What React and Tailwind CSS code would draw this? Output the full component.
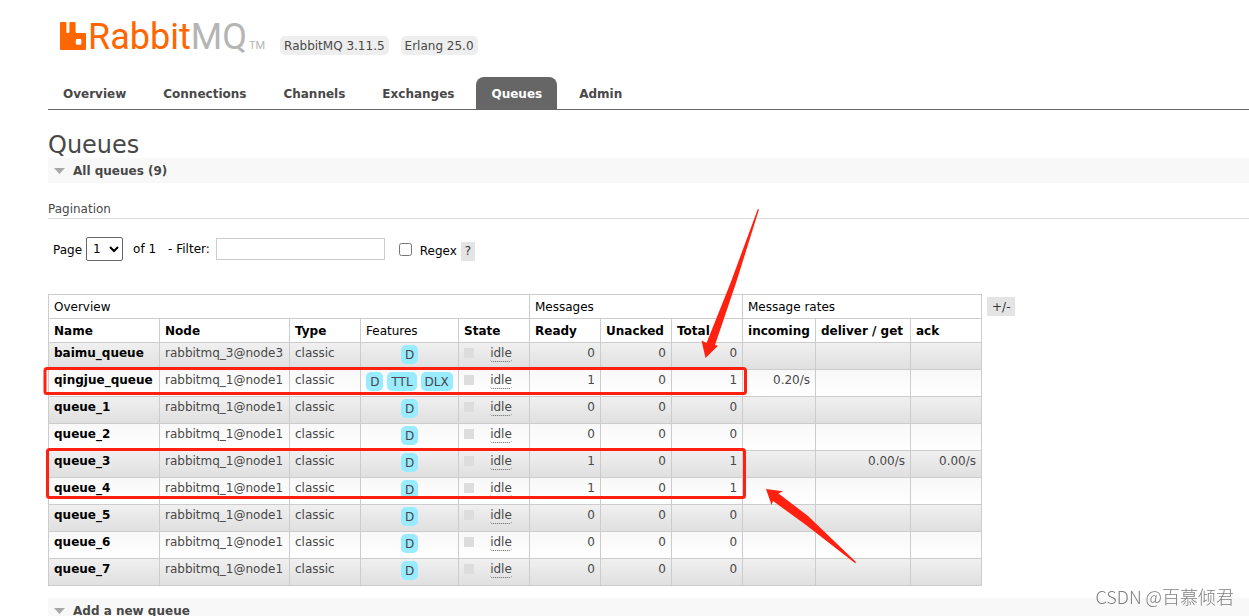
import { useState } from "react";

const TABS = ["Overview", "Connections", "Channels", "Exchanges", "Queues", "Admin"];

const COLUMNS = [
  { label: "Name", width: "w-[111px]", sortable: true },
  { label: "Node", width: "w-[130px]", sortable: true },
  { label: "Type", width: "w-[71px]", sortable: true },
  { label: "Features", width: "w-[98px]", sortable: false },
  { label: "State", width: "w-[71px]", sortable: true },
  { label: "Ready", width: "w-[71px]", sortable: true },
  { label: "Unacked", width: "w-[71px]", sortable: true },
  { label: "Total", width: "w-[71px]", sortable: true },
  { label: "incoming", width: "w-[73px]", sortable: true },
  { label: "deliver / get", width: "w-[95px]", sortable: true },
  { label: "ack", width: "w-[71px]", sortable: true },
];

const QUEUES = [
  { name: "baimu_queue", node: "rabbitmq_3@node3", features: ["D"], ready: 0, unacked: 0, total: 0 },
  {
    name: "qingjue_queue",
    node: "rabbitmq_1@node1",
    features: ["D", "TTL", "DLX"],
    ready: 1,
    unacked: 0,
    total: 1,
    incoming: "0.20/s",
  },
  { name: "queue_1", node: "rabbitmq_1@node1", features: ["D"], ready: 0, unacked: 0, total: 0 },
  { name: "queue_2", node: "rabbitmq_1@node1", features: ["D"], ready: 0, unacked: 0, total: 0 },
  {
    name: "queue_3",
    node: "rabbitmq_1@node1",
    features: ["D"],
    ready: 1,
    unacked: 0,
    total: 1,
    deliver: "0.00/s",
    ack: "0.00/s",
  },
  { name: "queue_4", node: "rabbitmq_1@node1", features: ["D"], ready: 1, unacked: 0, total: 1 },
  { name: "queue_5", node: "rabbitmq_1@node1", features: ["D"], ready: 0, unacked: 0, total: 0 },
  { name: "queue_6", node: "rabbitmq_1@node1", features: ["D"], ready: 0, unacked: 0, total: 0 },
  { name: "queue_7", node: "rabbitmq_1@node1", features: ["D"], ready: 0, unacked: 0, total: 0 },
];

const CELL = "border border-[#ccc] px-[5px]";

function Logo() {
  return (
    <a href="#/" className="flex items-end">
      <svg viewBox="0 0 26 28" className="w-[26px] h-7 mb-[5px]" aria-hidden="true">
        <path
          fill="#f60"
          fillRule="evenodd"
          d="M1 0h4.400a1 1 0 0 1 1 1v9a1 1 0 0 0 1 1h1a1 1 0 0 0 1-1V1a1 1 0 0 1 1-1H14.600a1 1 0 0 1 1 1v9a1 1 0 0 0 1 1h8.400a1 1 0 0 1 1 1v15a1 1 0 0 1-1 1H1a1 1 0 0 1-1-1V1a1 1 0 0 1 1-1zM17 17a1.200 1.200 0 0 0-1.200 1.200v3.400A1.200 1.200 0 0 0 17 22.800h3.200a1.200 1.200 0 0 0 1.200-1.200v-3.400A1.200 1.200 0 0 0 20.200 17z"
        />
      </svg>
      <span className="pl-[2px] font-[Roboto,sans-serif] text-[36px] leading-9 text-[#f60]">
        Rabbit<span className="text-[#b5b5b5]">MQ</span>
      </span>
      <span className="mb-[3px] pl-[2px] font-[Roboto,sans-serif] text-[11px] leading-3 text-[#b5b5b5]">TM</span>
    </a>
  );
}

function SectionBar({ title, open, onToggle }) {
  return (
    <h2 className="bg-[#f8f8f8]">
      <button
        type="button"
        onClick={onToggle}
        className="flex w-full items-center gap-2 pl-[6px] pt-px h-[25px] font-bold text-left"
      >
        <svg viewBox="0 0 11 6" className={open ? "w-[11px] h-[6px]" : "w-[11px] h-[6px] -rotate-90"} aria-hidden="true">
          <path d="M0 0h11L5.500 6z" fill="#a8a8a8" />
        </svg>
        {title}
      </button>
    </h2>
  );
}

function QueueRow({ queue, shaded }) {
  const num = `${CELL} pt-[3px] text-right`;
  return (
    <tr
      className={
        shaded
          ? "h-[27px] align-top bg-linear-to-b from-[#f0f0f0] to-[#dfdfdf]"
          : "h-[27px] align-top bg-linear-to-b from-[#f8f8f8] to-white"
      }
    >
      <td className={`${CELL} pt-[3px]`}>
        <a href={`#/queues/${queue.name}`} className="font-bold text-black">
          {queue.name}
        </a>
      </td>
      <td className={`${CELL} pt-[3px]`}>{queue.node}</td>
      <td className={`${CELL} pt-[3px]`}>classic</td>
      <td className={`${CELL} pt-[2px]`}>
        <div className="flex justify-center gap-1">
          {queue.features.map((f) => (
            <span key={f} className="rounded-[5px] bg-[#99ebff] px-1 pt-[2px] leading-[17px]">
              {f}
            </span>
          ))}
        </div>
      </td>
      <td className={`${CELL} pt-[3px]`}>
        <div className="flex">
          <span className="w-[10px] h-[10px] mt-[2px] bg-[#ddd]" />
          <span className="flex-1 pl-1 text-center">
            <abbr className="inline-block rounded-[3px] border-b border-dotted border-[#666] no-underline">
              idle
            </abbr>
          </span>
        </div>
      </td>
      <td className={num}>{queue.ready}</td>
      <td className={num}>{queue.unacked}</td>
      <td className={num}>{queue.total}</td>
      <td className={num}>{queue.incoming}</td>
      <td className={num}>{queue.deliver}</td>
      <td className={num}>{queue.ack}</td>
    </tr>
  );
}

// Red boxes and arrows drawn over the table
function Annotations() {
  return (
    <svg className="pointer-events-none absolute inset-0 w-full h-full" aria-hidden="true">
      <g fill="none" stroke="#ff2010" strokeWidth="3">
        <rect x="45" y="368.500" width="700.500" height="25" rx="2" />
        <rect x="47.500" y="449.500" width="697" height="48" rx="2" />
      </g>
      <g fill="#ff2010">
        <path d="M757.800 209l1.200 0.600L736 283 715 345l3 0.700L705.500 358l-4-17.500 5 2.500L730.500 283z" />
        <path d="M766 489l17 2.200-4.500 2.300L808 516l48 46-0.800 1.200L806 525 773 501l-1.500 4z" />
      </g>
    </svg>
  );
}

export default function App() {
  const [tab, setTab] = useState("Queues");
  const [filter, setFilter] = useState("");
  const [regex, setRegex] = useState(false);
  const [listOpen, setListOpen] = useState(true);
  const [addOpen, setAddOpen] = useState(true);

  return (
    <div className="relative min-h-screen overflow-hidden bg-white font-['DejaVu_Sans',Verdana,sans-serif] text-[12px] leading-[15px] text-[#484848]">
      <header className="pl-12">
        <div className="flex items-end gap-[15px] pl-3 pt-4 h-[55px]">
          <Logo />
          <div className="flex gap-3">
            <span className="rounded-[5px] bg-[#eee] px-1 pt-[3px] pb-px">RabbitMQ 3.11.5</span>
            <span className="rounded-[5px] bg-[#eee] px-1 pt-[3px] pb-px">Erlang 25.0</span>
          </div>
        </div>
        <nav className="mt-[22px] flex gap-[7px] border-b border-[#666]">
          {TABS.map((t) => (
            <a
              key={t}
              href={`#/${t.toLowerCase()}`}
              onClick={() => setTab(t)}
              className={
                t === tab
                  ? "rounded-t-lg bg-[#666] px-[15px] pt-[10px] pb-[7px] font-bold text-white"
                  : "px-[15px] pt-[10px] pb-[7px] font-bold"
              }
            >
              {t}
            </a>
          ))}
        </nav>
      </header>

      <main className="pl-12 pt-[21px]">
        <h1 className="pt-px text-[24px] leading-[26px]">Queues</h1>
        <SectionBar title="All queues (9)" open={listOpen} onToggle={() => setListOpen(!listOpen)} />

        {listOpen ? (
          <>
            <h3 className="mt-[19px] border-b border-[#ddd] pb-px">Pagination</h3>

            <form className="mt-[18px] flex h-6 items-center pl-[5px] text-black" onSubmit={(e) => e.preventDefault()}>
              <label htmlFor="page" className="pt-[2px]">
                Page
              </label>
              <select id="page" className="ml-1 h-6 w-[37px] rounded-[2px] border border-[#666] bg-white pl-[2px]">
                <option>1</option>
              </select>
              <span className="ml-[10px]">of 1</span>
              <label htmlFor="filter" className="ml-[12px]">
                - Filter:
              </label>
              <input
                id="filter"
                type="text"
                value={filter}
                onChange={(e) => setFilter(e.target.value)}
                className="ml-[6px] h-[22px] w-[169px] border border-[#ccc] px-1"
              />
              <input
                id="regex"
                type="checkbox"
                checked={regex}
                onChange={(e) => setRegex(e.target.checked)}
                className="ml-[14px] w-[13px] h-[13px]"
              />
              <label htmlFor="regex" className="ml-2 pt-[5px]">
                Regex
              </label>
              <button type="button" className="ml-1 mt-1 bg-[#e4e4e4] px-1 py-[2px] text-[#333]">
                ?
              </button>
            </form>

            <div className="mt-[33px] flex items-start gap-[5px]">
              <table className="table-fixed w-[934px] border-collapse">
                <colgroup>
                  {COLUMNS.map((c) => (
                    <col key={c.label} className={c.width} />
                  ))}
                </colgroup>
                <thead className="text-left text-black">
                  <tr className="h-6">
                    <th colSpan={5} className={`${CELL} pt-[2px] font-normal`}>
                      Overview
                    </th>
                    <th colSpan={3} className={`${CELL} pt-[2px] font-normal`}>
                      Messages
                    </th>
                    <th colSpan={3} className={`${CELL} pt-[2px] font-normal`}>
                      Message rates
                    </th>
                  </tr>
                  <tr className="h-6">
                    {COLUMNS.map((c) => (
                      <th
                        key={c.label}
                        className={`${CELL} pt-[2px] whitespace-nowrap ${c.sortable ? "font-bold" : "font-normal"}`}
                      >
                        {c.label}
                      </th>
                    ))}
                  </tr>
                </thead>
                <tbody>
                  {QUEUES.map((q, i) => (
                    <QueueRow key={q.name} queue={q} shaded={i % 2 === 0} />
                  ))}
                </tbody>
              </table>
              <button type="button" className="mt-[3px] bg-[#e4e4e4] px-[5px] pt-[3px] pb-px text-[#333]">
                +/-
              </button>
            </div>
          </>
        ) : null}

        <div className="mt-3">
          <SectionBar title="Add a new queue" open={addOpen} onToggle={() => setAddOpen(!addOpen)} />
        </div>
      </main>

      <Annotations />
      <p className="fixed bottom-[10px] right-[15px] font-['Noto_Sans_CJK_SC',sans-serif] text-[18px] leading-5 font-light text-[#808080]">
        CSDN @百慕倾君
      </p>
    </div>
  );
}
